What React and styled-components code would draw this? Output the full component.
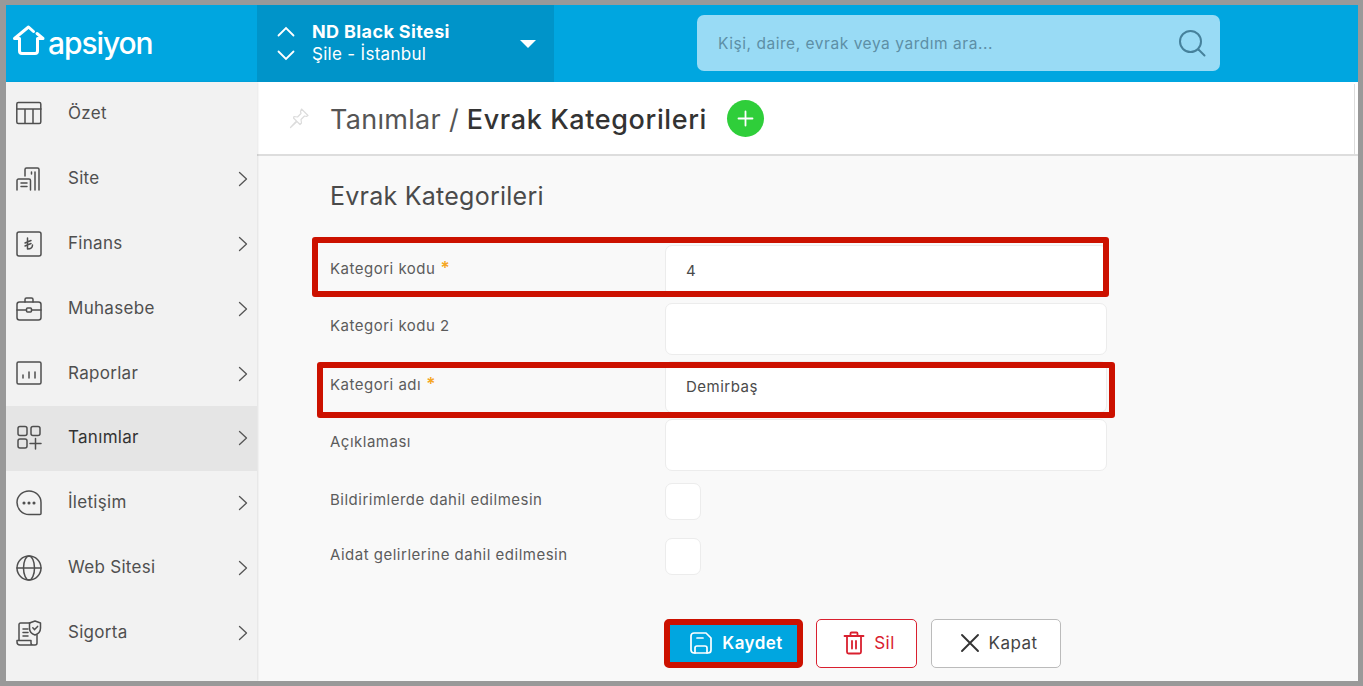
import React from "react";
import styled, { createGlobalStyle } from "styled-components";

const GlobalStyle = createGlobalStyle`
  html, body { margin: 0; padding: 0; }
  body { font-family: Inter, "Liberation Sans", sans-serif; color: #444; overflow: hidden; }
  * { box-sizing: border-box; }
`;

const Frame = styled.div`
  width: 1363px;
  height: 686px;
  border-style: solid;
  border-color: #999;
  border-width: 5px 5px 5px 6px;
  display: grid;
  grid-template-columns: 251px 1fr;
  grid-template-rows: 77px 1fr;
  overflow: hidden;
  background: #f9f9f9;
`;

const TopBar = styled.header`
  grid-column: 1 / 3;
  display: flex;
  align-items: stretch;
  background: #00a6e0;
`;

const Logo = styled.div`
  width: 251px;
  display: flex;
  align-items: center;
  padding-left: 6px;
  color: #fff;
`;

const LogoMark = styled.svg`
  margin-bottom: 6px;
`;

const LogoText = styled.span`
  font-size: 30px;
  font-weight: 500;
  letter-spacing: -1.1px;
  margin-bottom: 1px;
`;

const SitePicker = styled.div`
  width: 297px;
  background: #0094c9;
  display: flex;
  align-items: center;
  color: #fff;
  padding-left: 20px;
`;

const Arrows = styled.div`
  display: flex;
  flex-direction: column;
  gap: 13px;
  width: 35px;
`;

const SiteText = styled.div`
  flex: 1;
  line-height: 23px;
  font-size: 17px;
  letter-spacing: 0.3px;
  padding-bottom: 2px;
`;

const SiteName = styled.div`
  font-size: 18px;
  font-weight: 700;
  letter-spacing: 0.37px;
`;

const Caret = styled.div`
  width: 0;
  height: 0;
  margin-right: 18px;
  border-left: 8px solid transparent;
  border-right: 8px solid transparent;
  border-top: 8px solid #fff;
`;

const Search = styled.div`
  width: 523px;
  height: 56px;
  margin: 10px 0 0 143px;
  background: #99dbf5;
  border-radius: 7px;
  display: flex;
  align-items: center;
  justify-content: space-between;
  padding: 0 14px 0 21px;
  font-size: 15.5px;
  letter-spacing: 0.54px;
  color: #5d8fa6;
`;

const Sidebar = styled.nav`
  background: #f2f2f2;
  box-shadow: 1px 0 2px rgba(0, 0, 0, 0.1);
  z-index: 1;
`;

const MenuRow = styled.div`
  height: 64.8px;
  display: flex;
  align-items: center;
  padding: 0 9px 0 10px;
  background: ${(p) => (p.$active ? "#e5e5e5" : "transparent")};
  color: ${(p) => (p.$active ? "#333" : "#4f4f4f")};
  font-size: 17px;
  letter-spacing: 0.3px;
`;

const MenuIcon = styled.div`
  width: 26px;
  height: 26px;
  margin-right: 26px;
  color: #4f4f4f;
`;

const MenuLabel = styled.span`
  flex: 1;
  margin-top: -2px;
`;

const Main = styled.main`
  display: flex;
  flex-direction: column;
  min-width: 0;
`;

const TitleBar = styled.div`
  height: 74px;
  background: #fff;
  border-bottom: 2px solid #ddd;
  display: flex;
  align-items: center;
  padding-left: 31px;
  position: relative;
  &::after {
    content: "";
    position: absolute;
    right: 3px;
    top: 2px;
    bottom: 0;
    width: 1px;
    background: #ddd;
  }
`;

const Title = styled.h1`
  margin: 2px 0 0 20px;
  font-size: 27px;
  font-weight: 400;
  color: #555;
  letter-spacing: 0.3px;
  b {
    font-weight: 500;
    color: #333;
    letter-spacing: 0.6px;
  }
`;

const AddButton = styled.div`
  width: 37px;
  height: 37px;
  margin-left: 20px;
  border-radius: 50%;
  background: #2fce3a;
  display: flex;
  align-items: center;
  justify-content: center;
`;

const Content = styled.div`
  padding: 25px 0 0 73px;
`;

const Heading = styled.h2`
  margin: 0 0 34px;
  font-size: 25px;
  line-height: 30px;
  font-weight: 400;
  letter-spacing: 0.25px;
  color: #4a4a4a;
`;

const Fields = styled.div`
  display: flex;
  flex-direction: column;
  gap: 6px;
`;

const Row = styled.div`
  position: relative;
  display: grid;
  grid-template-columns: 335px 442px;
  height: ${(p) => (p.$check ? "37px" : "52px")};
  margin-top: ${(p) => (p.$check ? "6px" : "0")};
  margin-bottom: ${(p) => (p.$check ? "6px" : "0")};
`;

const Label = styled.label`
  font-size: 15px;
  line-height: 20px;
  letter-spacing: 0.5px;
  color: #5c5c5c;
  padding-top: ${(p) => (p.$check ? "7px" : "13px")};
`;

const Star = styled.span`
  color: #f5a623;
  margin-left: 5px;
  font-size: 17px;
  font-weight: 600;
`;

const Input = styled.div`
  height: 52px;
  background: #fff;
  border: 1px solid #ececec;
  border-radius: 7px;
  padding: 0 20px 2px;
  display: flex;
  align-items: center;
  font-size: 15px;
  letter-spacing: 0.5px;
  color: #4a4a4a;
`;

const CheckBox = styled.div`
  width: 36px;
  height: 37px;
  background: #fff;
  border: 1px solid #ececec;
  border-radius: 7px;
`;

const Highlight = styled.div`
  position: absolute;
  left: ${(p) => p.$left}px;
  top: ${(p) => p.$top}px;
  width: ${(p) => p.$width}px;
  height: ${(p) => p.$height}px;
  border: 6px solid #cc1100;
  border-radius: 3px;
  pointer-events: none;
`;

const Actions = styled.div`
  display: flex;
  gap: 13px;
  margin: 38px 0 0 334px;
`;

const Button = styled.div`
  width: ${(p) => p.$width}px;
  height: 49px;
  margin-left: ${(p) => p.$gapBefore || 0}px;
  display: flex;
  align-items: center;
  justify-content: center;
  gap: 9px;
  border-radius: 5px;
  padding: 0 0 2px 5px;
  font-size: 17px;
  letter-spacing: 0.45px;
  background: ${(p) => p.$bg || "#fff"};
  color: ${(p) => p.$color || "#444"};
  border: ${(p) => p.$border};
  font-weight: ${(p) => p.$weight || 400};
`;

const Svg = ({ size = 26, children, sw = 1.5, ...rest }) => (
  <svg width={size} height={size} viewBox="0 0 26 26" fill="none" stroke="currentColor" strokeWidth={sw} strokeLinecap="round" strokeLinejoin="round" {...rest}>
    {children}
  </svg>
);

const icons = {
  table: (
    <>
      <rect x="0.8" y="1.5" width="24" height="21" rx="1.5" />
      <path d="M1 8h24M9 8v14M17 8v14" />
    </>
  ),
  site: (
    <>
      <path d="M1 24V14.500a1.500 1.500 0 0 1 1.500-1.500H13a1.500 1.500 0 0 1 1.500 1.500V24" />
      <path d="M5 17h6M5 20.500h6M9 10V3.500A1.500 1.500 0 0 1 10.500 2h11A1.500 1.500 0 0 1 23 3.500V24M19 6v18M15.500 6v2" />
    </>
  ),
  lira: (
    <>
      <rect x="1" y="1" width="24" height="24" rx="2" />
      <path d="M11.500 7v11c3 0 5-1.500 5-4M9 12l6-2.500M9 15l6-2.500" />
    </>
  ),
  case: (
    <>
      <rect x="1" y="6" width="24" height="18" rx="2.500" />
      <path d="M9 6V3.500A1.500 1.500 0 0 1 10.500 2h5A1.500 1.500 0 0 1 17 3.500V6M1 14h9.500M15.500 14H25" />
      <rect x="10.500" y="12" width="5" height="4" rx="1" />
    </>
  ),
  chart: (
    <>
      <rect x="1" y="1" width="24" height="22" rx="1.500" />
      <path d="M7 17v-3M13 17v-6M19 17v-6" />
    </>
  ),
  grid: (
    <>
      <rect x="2" y="1.500" width="9" height="9" rx="2" />
      <rect x="15" y="1.500" width="9" height="9" rx="2" />
      <rect x="2" y="14" width="9" height="9" rx="2" />
      <path d="M14 18.500h11M19.500 13.500v10.500" />
    </>
  ),
  chat: (
    <>
      <path d="M13 1C6.400 1 1 6 1 12.500S6.400 24.500 13 24.500h11a1 1 0 0 0 1-1V12.500C25 6 19.600 1 13 1Z" />
      <circle cx="8" cy="13" r="0.800" fill="currentColor" />
      <circle cx="13" cy="13" r="0.800" fill="currentColor" />
      <circle cx="18" cy="13" r="0.800" fill="currentColor" />
    </>
  ),
  globe: (
    <>
      <circle cx="13" cy="13" r="12" />
      <ellipse cx="13" cy="13" rx="5.500" ry="12" />
      <path d="M1 13h24" />
    </>
  ),
  policy: (
    <>
      <path d="M3 20.500V4.500A1.500 1.500 0 0 1 4.500 3H14M21 15v8a2 2 0 0 1-2 2H4a3 3 0 0 1-3-3v-1.500h14V23a2 2 0 0 0 2 2" />
      <path d="M7 9h5M7 12.500h5M7 16h5" />
      <path d="M19 1l5.500 2v5c0 3.500-2.500 6-5.500 7-3-1-5.500-3.500-5.500-7V3Z" />
      <path d="M16.800 7.800l1.800 1.800 3-3.200" />
    </>
  ),
};

const Chevron = () => (
  <svg width="10" height="16" viewBox="0 0 10 16" fill="none" stroke="#555" strokeWidth="1.300" strokeLinecap="round" strokeLinejoin="round">
    <path d="M1.500 1.500L8.500 8l-7 6.500" />
  </svg>
);

const menu = [
  ["table", "Özet", false],
  ["site", "Site", true],
  ["lira", "Finans", true],
  ["case", "Muhasebe", true],
  ["chart", "Raporlar", true],
  ["grid", "Tanımlar", true, true],
  ["chat", "İletişim", true],
  ["globe", "Web Sitesi", true],
  ["policy", "Sigorta", true],
];

export default function App() {
  return (
    <>
      <GlobalStyle />
      <Frame>
        <TopBar>
          <Logo>
            <LogoMark width="36" height="34" viewBox="0 0 36 34" fill="none" stroke="#fff" strokeWidth="3" strokeLinejoin="round" strokeLinecap="round">
              <path d="M21.500 7.500L16.500 3 2.500 14.500H7.500V27a2.500 2.500 0 0 0 2.500 2.500h13a2.500 2.500 0 0 0 2.500-2.500V14.500H31L25 9.500" />
            </LogoMark>
            <LogoText>apsiyon</LogoText>
          </Logo>
          <SitePicker>
            <Arrows>
              <svg width="18" height="11" viewBox="0 0 18 11" fill="none" stroke="#fff" strokeWidth="1.800" strokeLinecap="round"><path d="M1.500 9.500L9 2l7.500 7.500" /></svg>
              <svg width="18" height="11" viewBox="0 0 18 11" fill="none" stroke="#fff" strokeWidth="1.800" strokeLinecap="round"><path d="M1.500 1.500L9 9l7.500-7.500" /></svg>
            </Arrows>
            <SiteText>
              <SiteName>ND Black Sitesi</SiteName>
              Şile - İstanbul
            </SiteText>
            <Caret />
          </SitePicker>
          <Search>
            Kişi, daire, evrak veya yardım ara...
            <svg width="28" height="28" viewBox="0 0 28 28" fill="none" stroke="#46819b" strokeWidth="2" strokeLinecap="round"><circle cx="12.500" cy="12.500" r="10.500" /><path d="M20.500 20.500l6 6" /></svg>
          </Search>
        </TopBar>
        <Sidebar>
          {menu.map(([icon, label, arrow, active]) => (
            <MenuRow key={label} $active={active}>
              <MenuIcon><Svg>{icons[icon]}</Svg></MenuIcon>
              <MenuLabel>{label}</MenuLabel>
              {arrow && <Chevron />}
            </MenuRow>
          ))}
        </Sidebar>
        <Main>
          <TitleBar>
            <svg width="22" height="22" viewBox="0 0 22 22" fill="none" stroke="#dcdcdc" strokeWidth="1.200" strokeLinejoin="round" strokeLinecap="round">
              <path d="M13.500 2L20 8.500l-1.500 1-2-.5-3.500 3.500.5 3.500-1.500 1.500-3-3-6.500 6 6-6.500-3-3L6 9.500l3.500.5L13 6.500l-.5-2Z" />
            </svg>
            <Title>Tanımlar / <b>Evrak Kategorileri</b></Title>
            <AddButton>
              <svg width="17" height="17" viewBox="0 0 17 17" stroke="#fff" strokeWidth="1.800" strokeLinecap="round"><path d="M8.500 1.500v14M1.500 8.500h14" /></svg>
            </AddButton>
          </TitleBar>
          <Content>
            <Heading>Evrak Kategorileri</Heading>
            <Fields>
              <Row>
                <Label>Kategori kodu<Star>*</Star></Label>
                <Input>4</Input>
                <Highlight $left={-18} $top={-8} $width={797} $height={60} />
              </Row>
              <Row>
                <Label>Kategori kodu 2</Label>
                <Input />
              </Row>
              <Row>
                <Label>Kategori adı<Star>*</Star></Label>
                <Input>Demirbaş</Input>
                <Highlight $left={-13} $top={1} $width={798} $height={56} />
              </Row>
              <Row>
                <Label>Açıklaması</Label>
                <Input />
              </Row>
              <Row $check>
                <Label $check>Bildirimlerde dahil edilmesin</Label>
                <CheckBox />
              </Row>
              <Row $check>
                <Label $check>Aidat gelirlerine dahil edilmesin</Label>
                <CheckBox />
              </Row>
            </Fields>
            <Actions>
              <Button $width={139} $bg="#00a6e0" $color="#fff" $border="6px solid #cc1100" $weight={600}>
                <svg width="24" height="24" viewBox="0 0 24 24" fill="none" stroke="#fff" strokeWidth="1.700" strokeLinejoin="round" strokeLinecap="round">
                  <path d="M5 2h12l5 5v12a3 3 0 0 1-3 3H5a3 3 0 0 1-3-3V5a3 3 0 0 1 3-3Z" />
                  <path d="M8 7h6M6 22v-5a2 2 0 0 1 2-2h8a2 2 0 0 1 2 2v5" />
                </svg>
                Kaydet
              </Button>
              <Button $width={101} $color="#d9202f" $border="1px solid #d9202f">
                <svg width="22" height="24" viewBox="0 0 22 24" fill="none" stroke="#d9202f" strokeWidth="1.800" strokeLinejoin="round" strokeLinecap="round">
                  <path d="M1.500 5h19M7.500 5V2.500A1 1 0 0 1 8.500 1.500h5a1 1 0 0 1 1 1V5M4 5v16a1.500 1.500 0 0 0 1.500 1.500h11A1.500 1.500 0 0 0 18 21V5M9 10v7.500M13 10v7.500" />
                </svg>
                Sil
              </Button>
              <Button $width={130} $gapBefore={1} $border="1px solid #bbb">
                <svg width="20" height="20" viewBox="0 0 20 20" stroke="#333" strokeWidth="1.900" strokeLinecap="round"><path d="M2 2l16 16M18 2L2 18" /></svg>
                Kapat
              </Button>
            </Actions>
          </Content>
        </Main>
      </Frame>
    </>
  );
}
